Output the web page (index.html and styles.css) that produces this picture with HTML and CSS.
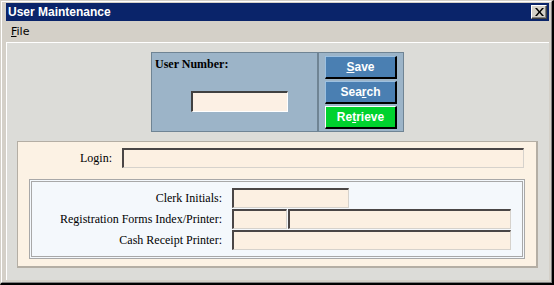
FILE: index.html
```html
<!DOCTYPE html>
<html lang="en">
<head>
    <meta charset="UTF-8">
    <title>User Maintenance</title>
    <link rel="stylesheet" href="styles.css">
</head>
<body>

    <div class="window">
        <div class="frame">
            <div class="title-bar">
                <span class="title">User Maintenance</span>
                <button class="close-btn">
                    <svg width="9" height="8" viewBox="0 0 9 8">
                        <path d="M0 0h2l2.5 3 2.5-3h2L5.5 4 9 8H7L4.5 5 2 8H0l3.5-4z" fill="#000"/>
                    </svg>
                </button>
            </div>

            <div class="menu-bar">
                <span class="menu-item"><u>F</u>ile</span>
            </div>

            <div class="client">
                <!-- user lookup -->
                <div class="top-row">
                    <div class="user-panel">
                        <div class="user-label">User Number:</div>
                        <input type="text" class="user-input">
                    </div>
                    <div class="btn-panel">
                        <button class="action-btn"><u>S</u>ave</button>
                        <button class="action-btn">Sea<u>r</u>ch</button>
                        <button class="action-btn retrieve">Re<u>t</u>rieve</button>
                    </div>
                </div>

                <!-- user details -->
                <div class="details">
                    <div class="login-row">
                        <label class="login-label">Login:</label>
                        <input type="text" class="field login-field">
                    </div>

                    <div class="settings">
                        <div class="setting-row">
                            <label class="setting-label">Clerk Initials:</label>
                            <input type="text" class="field clerk-field">
                        </div>
                        <div class="setting-row">
                            <label class="setting-label">Registration Forms Index/Printer:</label>
                            <input type="text" class="field index-field">
                            <input type="text" class="field printer-field">
                        </div>
                        <div class="setting-row">
                            <label class="setting-label">Cash Receipt Printer:</label>
                            <input type="text" class="field cash-field">
                        </div>
                    </div>
                </div>
            </div>
        </div>
    </div>

</body>
</html>
```

FILE: styles.css
```css
body {
    margin: 0;
    padding: 0;
    background-color: #fff;
    font-family: 'Liberation Serif', serif;
}

.window {
    width: 554px;
    height: 285px;
    box-sizing: border-box;
    border-top: 1px solid #d4d0c8;
    border-left: 1px solid #d4d0c8;
    border-right: 2px solid #000;
    border-bottom: 2px solid #000;
}

.frame {
    height: 100%;
    box-sizing: border-box;
    border-top: 1px solid #fff;
    border-left: 1px solid #fff;
    border-right: 1px solid #808080;
    border-bottom: 1px solid #808080;
    background-color: #d4d0c8;
    padding: 1px 2px 2px 4px;
    display: flex;
    flex-direction: column;
}

.title-bar {
    height: 18px;
    background-color: #0a246a;
    display: flex;
    align-items: center;
    justify-content: space-between;
    padding: 0 2px 0 2px;
}

.title {
    color: #fff;
    font-family: 'Liberation Sans', sans-serif;
    font-weight: bold;
    font-size: 12px;
}

.close-btn {
    width: 16px;
    height: 14px;
    padding: 0;
    background-color: #d4d0c8;
    border-top: 1px solid #fff;
    border-left: 1px solid #fff;
    border-right: 1px solid #404040;
    border-bottom: 1px solid #404040;
    box-shadow: inset -1px -1px 0 #808080;
    display: flex;
    align-items: center;
    justify-content: center;
}

.menu-bar {
    height: 21px;
    display: flex;
    align-items: center;
    padding-left: 5px;
}

.menu-item {
    font-family: 'DejaVu Sans', sans-serif;
    font-size: 11px;
}

.client {
    flex: 1;
    background-color: #dcdcd8;
    border-top: 1px solid #fff;
    border-left: 1px solid #fff;
    padding: 9px 11px 0 10px;
}

.top-row {
    display: flex;
    justify-content: center;
}

.user-panel {
    width: 165px;
    height: 78px;
    background-color: #9cb4c8;
    border: 1px solid #6f8494;
    border-right: 2px solid #6f8494;
}

.user-label {
    font-weight: bold;
    font-size: 12px;
    padding: 4px 0 0 3px;
    color: #000;
}

.user-input {
    display: block;
    width: 97px;
    height: 21px;
    box-sizing: border-box;
    margin: 19px 0 0 39px;
    background-color: #fcf0e4;
    border-top: 2px solid #404040;
    border-left: 2px solid #404040;
    border-right: 1px solid #fff;
    border-bottom: 1px solid #fff;
    padding: 0;
}

.btn-panel {
    width: 84px;
    height: 75px;
    background-color: #9cb4c8;
    border: 1px solid #6f8494;
    border-left: none;
    display: flex;
    flex-direction: column;
    align-items: center;
    gap: 2px;
    padding-top: 3px;
    box-sizing: content-box;
}

.action-btn {
    width: 72px;
    height: 23px;
    flex: none;
    background-color: #4a7fb2;
    color: #fff;
    font-family: 'Liberation Sans', sans-serif;
    font-weight: bold;
    font-size: 12px;
    border-top: 1px solid #9cc0e0;
    border-left: 1px solid #9cc0e0;
    border-right: 2px solid #000;
    border-bottom: 2px solid #000;
    padding: 0;
}

.retrieve {
    background-color: #00d22e;
    border-top: 1px solid #fff;
    border-left: 1px solid #fff;
}

.details {
    margin-top: 9px;
    height: 127px;
    box-sizing: border-box;
    background-color: #fcf2e4;
    border: 2px solid #b4aea4;
    border-top-width: 1px;
    border-left-width: 1px;
    padding: 6px 11px 0 11px;
}

.login-row {
    display: flex;
    align-items: center;
}

.login-label {
    width: 83px;
    text-align: right;
    font-size: 12px;
    padding-right: 10px;
}

.field {
    height: 20px;
    box-sizing: border-box;
    background-color: #fcf0e2;
    border-top: 2px solid #4a4646;
    border-left: 2px solid #4a4646;
    border-right: 1px solid #d6d2cc;
    border-bottom: 1px solid #d6d2cc;
    padding: 0;
    margin: 0;
}

.login-field {
    width: 402px;
}

.settings {
    margin-top: 11px;
    height: 80px;
    box-sizing: border-box;
    background-color: #f4f8fc;
    border: 3px double #a8a8a8;
    padding: 6px 0 0 0;
    display: flex;
    flex-direction: column;
    gap: 1px;
}

.setting-row {
    display: flex;
    align-items: center;
}

.setting-label {
    width: 190px;
    text-align: right;
    font-size: 12px;
    padding-right: 10px;
}

.clerk-field {
    width: 117px;
}

.index-field {
    width: 55px;
    margin-right: 1px;
}

.printer-field {
    width: 223px;
}

.cash-field {
    width: 279px;
}
```
